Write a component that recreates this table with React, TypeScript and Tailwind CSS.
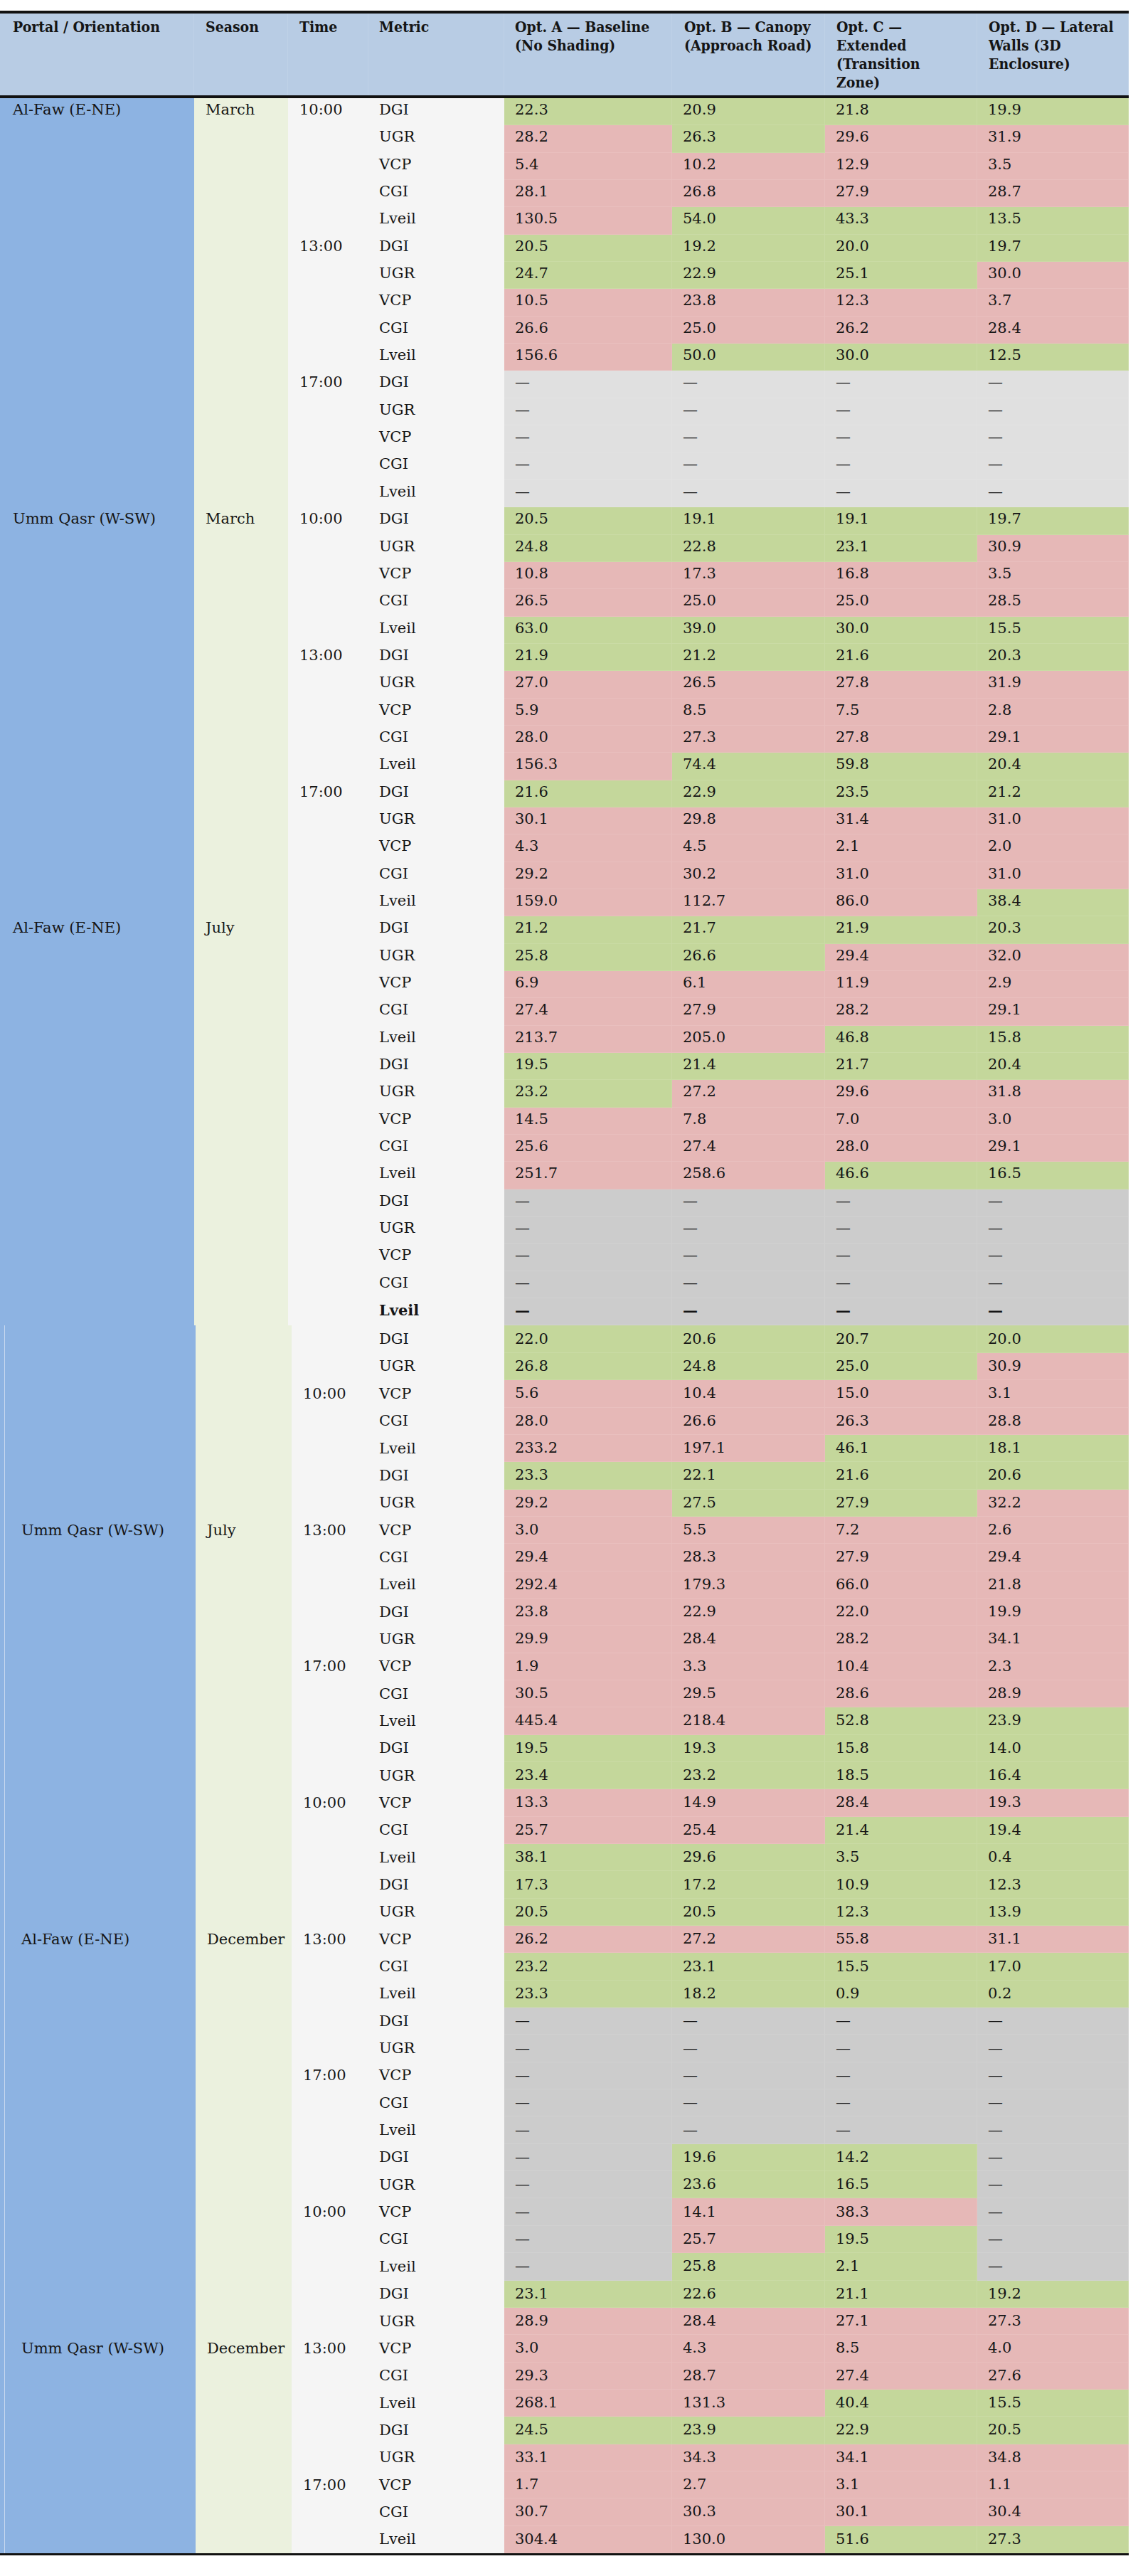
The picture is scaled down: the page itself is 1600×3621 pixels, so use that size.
import * as React from "react"

type Group = { time: string; rows: string[] }
type Section = { portal: string; season: string; centered: boolean; groups: Group[]; boldLast?: boolean }

const METRICS = ["DGI", "UGR", "VCP", "CGI", "Lveil"]

// g = green, r = red, l = light grey, d = dark grey
const FILL: Record<string, string> = {
  g: "bg-[#c4d79b]",
  r: "bg-[#e6b8b7]",
  l: "bg-[#e0e0e0]",
  d: "bg-[#cccccc]",
}

const VALUE_W = ["w-[236px]", "w-[215px]", "w-[214px]", "w-[213px]"]

const LIGHT = ["—l —l —l —l", "—l —l —l —l", "—l —l —l —l", "—l —l —l —l", "—l —l —l —l"]
const DARK = ["—d —d —d —d", "—d —d —d —d", "—d —d —d —d", "—d —d —d —d", "—d —d —d —d"]

const sections: Section[] = [
  {
    portal: "Al-Faw (E-NE)",
    season: "March",
    centered: false,
    groups: [
      { time: "10:00", rows: ["22.3g 20.9g 21.8g 19.9g", "28.2r 26.3g 29.6r 31.9r", "5.4r 10.2r 12.9r 3.5r", "28.1r 26.8r 27.9r 28.7r", "130.5r 54.0g 43.3g 13.5g"] },
      { time: "13:00", rows: ["20.5g 19.2g 20.0g 19.7g", "24.7g 22.9g 25.1g 30.0r", "10.5r 23.8r 12.3r 3.7r", "26.6r 25.0r 26.2r 28.4r", "156.6r 50.0g 30.0g 12.5g"] },
      { time: "17:00", rows: LIGHT },
    ],
  },
  {
    portal: "Umm Qasr (W-SW)",
    season: "March",
    centered: false,
    groups: [
      { time: "10:00", rows: ["20.5g 19.1g 19.1g 19.7g", "24.8g 22.8g 23.1g 30.9r", "10.8r 17.3r 16.8r 3.5r", "26.5r 25.0r 25.0r 28.5r", "63.0g 39.0g 30.0g 15.5g"] },
      { time: "13:00", rows: ["21.9g 21.2g 21.6g 20.3g", "27.0r 26.5r 27.8r 31.9r", "5.9r 8.5r 7.5r 2.8r", "28.0r 27.3r 27.8r 29.1r", "156.3r 74.4g 59.8g 20.4g"] },
      { time: "17:00", rows: ["21.6g 22.9g 23.5g 21.2g", "30.1r 29.8r 31.4r 31.0r", "4.3r 4.5r 2.1r 2.0r", "29.2r 30.2r 31.0r 31.0r", "159.0r 112.7r 86.0r 38.4g"] },
    ],
  },
  {
    portal: "Al-Faw (E-NE)",
    season: "July",
    centered: false,
    boldLast: true,
    groups: [
      { time: "", rows: ["21.2g 21.7g 21.9g 20.3g", "25.8g 26.6g 29.4r 32.0r", "6.9r 6.1r 11.9r 2.9r", "27.4r 27.9r 28.2r 29.1r", "213.7r 205.0r 46.8g 15.8g"] },
      { time: "", rows: ["19.5g 21.4g 21.7g 20.4g", "23.2g 27.2r 29.6r 31.8r", "14.5r 7.8r 7.0r 3.0r", "25.6r 27.4r 28.0r 29.1r", "251.7r 258.6r 46.6g 16.5g"] },
      { time: "", rows: DARK },
    ],
  },
  {
    portal: "Umm Qasr (W-SW)",
    season: "July",
    centered: true,
    groups: [
      { time: "10:00", rows: ["22.0g 20.6g 20.7g 20.0g", "26.8g 24.8g 25.0g 30.9r", "5.6r 10.4r 15.0r 3.1r", "28.0r 26.6r 26.3r 28.8r", "233.2r 197.1r 46.1g 18.1g"] },
      { time: "13:00", rows: ["23.3g 22.1g 21.6g 20.6g", "29.2r 27.5g 27.9g 32.2r", "3.0r 5.5r 7.2r 2.6r", "29.4r 28.3r 27.9r 29.4r", "292.4r 179.3r 66.0r 21.8r"] },
      { time: "17:00", rows: ["23.8r 22.9r 22.0r 19.9r", "29.9r 28.4r 28.2r 34.1r", "1.9r 3.3r 10.4r 2.3r", "30.5r 29.5r 28.6r 28.9r", "445.4r 218.4r 52.8g 23.9g"] },
    ],
  },
  {
    portal: "Al-Faw (E-NE)",
    season: "December",
    centered: true,
    groups: [
      { time: "10:00", rows: ["19.5g 19.3g 15.8g 14.0g", "23.4g 23.2g 18.5g 16.4g", "13.3r 14.9r 28.4r 19.3r", "25.7r 25.4r 21.4g 19.4g", "38.1g 29.6g 3.5g 0.4g"] },
      { time: "13:00", rows: ["17.3g 17.2g 10.9g 12.3g", "20.5g 20.5g 12.3g 13.9g", "26.2r 27.2r 55.8r 31.1r", "23.2g 23.1g 15.5g 17.0g", "23.3g 18.2g 0.9g 0.2g"] },
      { time: "17:00", rows: DARK },
    ],
  },
  {
    portal: "Umm Qasr (W-SW)",
    season: "December",
    centered: true,
    groups: [
      { time: "10:00", rows: ["—d 19.6g 14.2g —d", "—d 23.6g 16.5g —d", "—d 14.1r 38.3r —d", "—d 25.7r 19.5g —d", "—d 25.8g 2.1g —d"] },
      { time: "13:00", rows: ["23.1g 22.6g 21.1g 19.2g", "28.9r 28.4r 27.1r 27.3r", "3.0r 4.3r 8.5r 4.0r", "29.3r 28.7r 27.4r 27.6r", "268.1r 131.3r 40.4g 15.5g"] },
      { time: "17:00", rows: ["24.5g 23.9g 22.9g 20.5g", "33.1r 34.3r 34.1r 34.8r", "1.7r 2.7r 3.1r 1.1r", "30.7r 30.3r 30.1r 30.4r", "304.4r 130.0r 51.6g 27.3g"] },
    ],
  },
]

function DataRow({ metric, row, centered, bold }: { metric: string; row: string; centered: boolean; bold: boolean }) {
  const align = centered ? "items-center" : "items-start pt-[4px]"
  const cells = row.split(" ")
  return (
    <div className="flex h-[38.35px]">
      <div className={`flex w-[191px] pl-[15px] ${align} bg-[#f5f5f5] ${bold ? "font-bold" : ""}`}>{metric}</div>
      {cells.map((c, i) => (
        <div
          key={i}
          className={`flex ${VALUE_W[i]} pl-[15px] ${align} ${FILL[c.slice(-1)]} border-b border-r border-white/10 ${bold ? "font-bold" : ""}`}
        >
          {c.slice(0, -1)}
        </div>
      ))}
    </div>
  )
}

function SectionBlock({ s }: { s: Section }) {
  const align = s.centered ? "items-center" : "items-start pt-[4px]"
  return (
    <div className="flex">
      {s.centered ? (
        <div className="flex w-[275px] bg-[#8db3e2] pl-[6px]">
          <div className={`flex flex-1 border-l border-[#c8d9ef] pl-[23px] ${align}`}>{s.portal}</div>
        </div>
      ) : (
        <div className={`flex w-[273px] bg-[#8db3e2] pl-[18px] ${align}`}>{s.portal}</div>
      )}
      <div className={`flex ${s.centered ? "w-[135px]" : "w-[132px]"} bg-[#ebf1de] pl-[16px] ${align}`}>{s.season}</div>
      <div className="flex flex-col">
        {s.groups.map((g, gi) => (
          <div key={gi} className="flex">
            <div className={`flex ${s.centered ? "w-[108px]" : "w-[113px]"} bg-[#f5f5f5] pl-[16px] ${align}`}>{g.time}</div>
            <div className="flex flex-col">
              {g.rows.map((r, ri) => (
                <DataRow
                  key={ri}
                  metric={METRICS[ri]}
                  row={r}
                  centered={s.centered}
                  bold={!!s.boldLast && gi === s.groups.length - 1 && ri === 4}
                />
              ))}
            </div>
          </div>
        ))}
      </div>
    </div>
  )
}

const HEADERS: { w: string; pl: string; lines: string[] }[] = [
  { w: "w-[273px]", pl: "pl-[18px]", lines: ["Portal / Orientation"] },
  { w: "w-[132px]", pl: "pl-[16px]", lines: ["Season"] },
  { w: "w-[113px]", pl: "pl-[16px]", lines: ["Time"] },
  { w: "w-[191px]", pl: "pl-[15px]", lines: ["Metric"] },
  { w: "w-[236px]", pl: "pl-[15px]", lines: ["Opt. A — Baseline", "(No Shading)"] },
  { w: "w-[215px]", pl: "pl-[17px]", lines: ["Opt. B — Canopy", "(Approach Road)"] },
  { w: "w-[214px]", pl: "pl-[16px]", lines: ["Opt. C —", "Extended", "(Transition", "Zone)"] },
  { w: "w-[213px]", pl: "pl-[16px]", lines: ["Opt. D — Lateral", "Walls (3D", "Enclosure)"] },
]

export default function App() {
  return (
    <div className="min-h-screen bg-white pt-[15px] font-['DejaVu_Serif',serif] text-[21px] leading-[25px] text-[#151515]">
      <div className="w-[1587px] border-t-[4px] border-b-[3px] border-[#111]">
        <div className="flex h-[119px] border-b-[4px] border-[#111] bg-[#b8cce4] font-['DejaVu_Serif_Condensed','DejaVu_Serif',serif] font-bold leading-[26px]">
          {HEADERS.map((h, i) => (
            <div key={i} className={`${h.w} ${h.pl} border-r border-white/10 pt-[6px] whitespace-nowrap`}>
              {h.lines.map((l, j) => (
                <div key={j}>{l}</div>
              ))}
            </div>
          ))}
        </div>
        {sections.map((s, i) => (
          <SectionBlock key={i} s={s} />
        ))}
      </div>
    </div>
  )
}
